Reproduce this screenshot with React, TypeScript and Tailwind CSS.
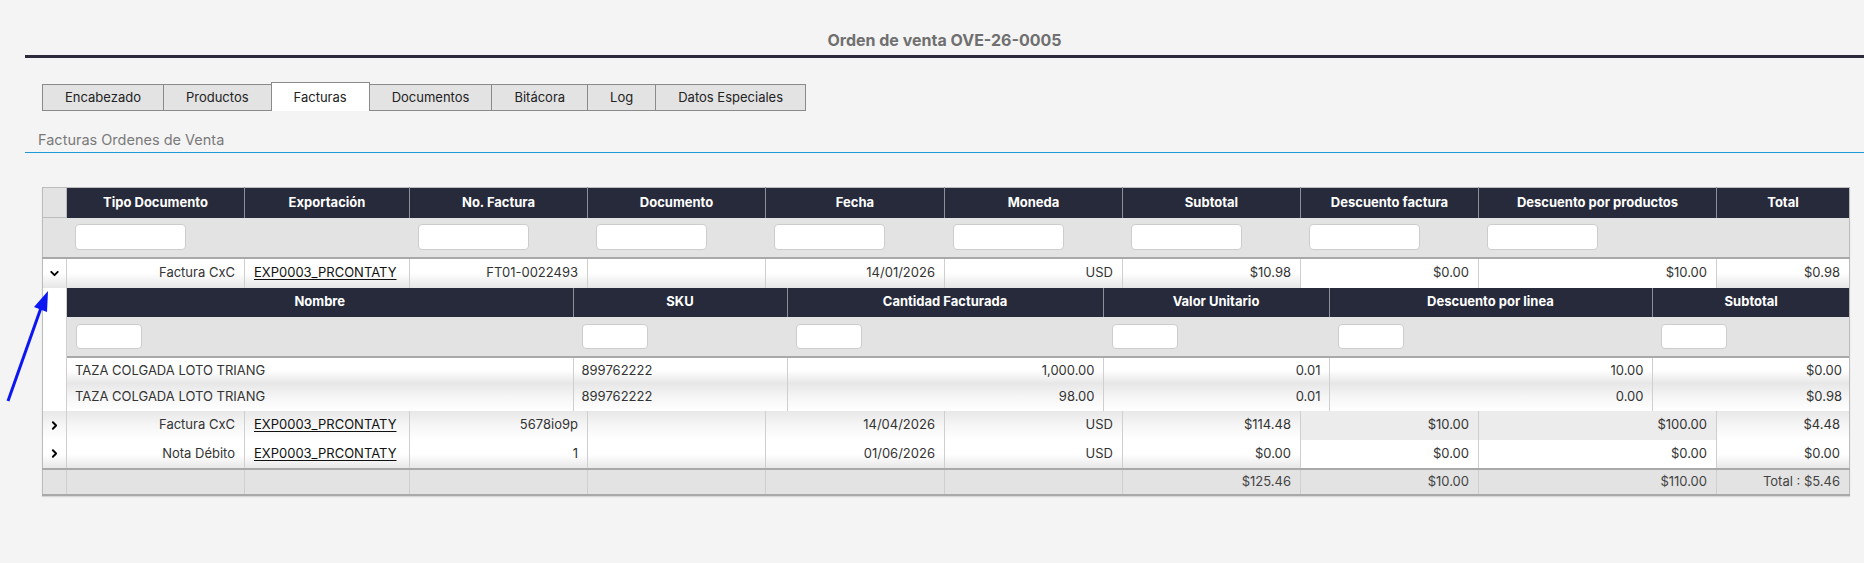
import { ChevronDown, ChevronRight } from 'lucide-react';

type Align = 'left' | 'right';

const tabs = ['Encabezado', 'Productos', 'Facturas', 'Documentos', 'Bitácora', 'Log', 'Datos Especiales'];

const invoiceCols: { title: string; width: string; filter: boolean; align: Align; flat?: boolean }[] = [
  { title: 'Tipo Documento', width: 'w-[178px]', filter: true, align: 'right' },
  { title: 'Exportación', width: 'w-[165px]', filter: false, align: 'left' },
  { title: 'No. Factura', width: 'w-[178px]', filter: true, align: 'right' },
  { title: 'Documento', width: 'w-[178px]', filter: true, align: 'right' },
  { title: 'Fecha', width: 'w-[179px]', filter: true, align: 'right' },
  { title: 'Moneda', width: 'w-[178px]', filter: true, align: 'right' },
  { title: 'Subtotal', width: 'w-[178px]', filter: true, align: 'right' },
  { title: 'Descuento factura', width: 'w-[178px]', filter: true, align: 'right', flat: true },
  { title: 'Descuento por productos', width: 'w-[238px]', filter: true, align: 'right', flat: true },
  { title: 'Total', width: 'w-[133px]', filter: false, align: 'right' },
];

const productCols: { title: string; width: string; align: Align }[] = [
  { title: 'Nombre', width: 'w-[506px]', align: 'left' },
  { title: 'SKU', width: 'w-[214px]', align: 'left' },
  { title: 'Cantidad Facturada', width: 'w-[316px]', align: 'right' },
  { title: 'Valor Unitario', width: 'w-[226px]', align: 'right' },
  { title: 'Descuento por linea', width: 'w-[323px]', align: 'right' },
  { title: 'Subtotal', width: 'w-[198px]', align: 'right' },
];

const invoices = [
  {
    open: true,
    cells: ['Factura CxC', 'EXP0003_PRCONTATY', 'FT01-0022493', '', '14/01/2026', 'USD', '$10.98', '$0.00', '$10.00', '$0.98'],
    products: [
      ['TAZA COLGADA LOTO TRIANG', '899762222', '1,000.00', '0.01', '10.00', '$0.00'],
      ['TAZA COLGADA LOTO TRIANG', '899762222', '98.00', '0.01', '0.00', '$0.98'],
    ],
  },
  {
    open: false,
    cells: ['Factura CxC', 'EXP0003_PRCONTATY', '5678io9p', '', '14/04/2026', 'USD', '$114.48', '$10.00', '$100.00', '$4.48'],
    products: [],
  },
  {
    open: false,
    cells: ['Nota Débito', 'EXP0003_PRCONTATY', '1', '', '01/06/2026', 'USD', '$0.00', '$0.00', '$0.00', '$0.00'],
    products: [],
  },
];

const totals = ['', '', '', '', '', '', '$125.46', '$10.00', '$110.00', 'Total : $5.46'];

const rowBg = (even: boolean) =>
  even
    ? 'bg-linear-to-b from-[#e8e8e8] via-[#f6f6f6] to-white'
    : 'bg-linear-to-b from-white via-white to-[#e6e6e6]';

function FilterInput({ small }: { small?: boolean }) {
  return (
    <input
      className={
        small
          ? 'block h-[25px] w-[66px] rounded-[4px] border border-[#cdcdcd] bg-white outline-none'
          : 'block h-[26px] w-[111px] rounded-[4px] border border-[#cdcdcd] bg-white outline-none'
      }
    />
  );
}

function ProductsGrid({ rows }: { rows: string[][] }) {
  return (
    <table className="w-full table-fixed border-collapse">
      <colgroup>
        {productCols.map((c) => (
          <col key={c.title} className={c.width} />
        ))}
      </colgroup>
      <thead>
        <tr className="h-[29px] bg-[#272a3b]">
          {productCols.map((c) => (
            <th key={c.title} className="border-x border-[#8e8f98] px-2 text-center text-[13px] font-bold text-white first:border-l-0 last:border-r-0">
              {c.title}
            </th>
          ))}
        </tr>
        <tr className="h-[40px] border-b-2 border-[#a9a9a9] bg-[#e3e3e3]">
          {productCols.map((c) => (
            <th key={c.title} className="px-[9px] font-normal">
              <FilterInput small />
            </th>
          ))}
        </tr>
      </thead>
      <tbody>
        {rows.map((r, i) => (
          <tr key={i} className={`h-[27px] ${rowBg(i % 2 === 1)}`}>
            {r.map((v, j) => (
              <td
                key={j}
                className={`border-x border-[#cfcfcf] px-2 text-[13px] text-[#333] first:border-l-0 last:border-r-0 ${
                  productCols[j].align === 'right' ? 'text-right' : 'text-left'
                }`}
              >
                {v}
              </td>
            ))}
          </tr>
        ))}
      </tbody>
    </table>
  );
}

function InvoicesGrid() {
  return (
    <table className="ml-[42px] w-[1807px] table-fixed border-collapse border border-[#bcbcbc] border-b-2 border-b-[#a9a9a9] shadow-[0_1px_1px_rgba(0,0,0,0.12)]">
      <colgroup>
        <col className="w-[24px]" />
        {invoiceCols.map((c) => (
          <col key={c.title} className={c.width} />
        ))}
      </colgroup>
      <thead>
        <tr className="h-[30px]">
          <th className="border border-[#bcbcbc] bg-[#e3e3e3]" />
          {invoiceCols.map((c) => (
            <th key={c.title} className="border-x border-[#8e8f98] bg-[#272a3b] px-2 text-center text-[13px] font-bold text-white last:border-r-0">
              {c.title}
            </th>
          ))}
        </tr>
        <tr className="h-[40px] border-b-2 border-[#a9a9a9] bg-[#e3e3e3]">
          <th />
          {invoiceCols.map((c) => (
            <th key={c.title} className="px-[8px] font-normal">
              {c.filter && <FilterInput />}
            </th>
          ))}
        </tr>
      </thead>
      <tbody>
        {invoices.map((inv, i) => {
          const even = i % 2 === 1;
          return [
            <tr key={`r${i}`} className={`${i === 0 ? 'h-[30px]' : 'h-[29px]'} ${rowBg(even)}`}>
              <td className="border-r border-[#cfcfcf] text-center">
                {inv.open ? (
                  <ChevronDown className="mx-auto size-[13px] text-black" strokeWidth={3.5} />
                ) : (
                  <ChevronRight className="mx-auto size-[13px] text-black" strokeWidth={3.5} />
                )}
              </td>
              {inv.cells.map((v, j) => (
                <td
                  key={j}
                  className={`border-x border-[#cfcfcf] px-[9px] text-[13px] text-[#333] last:border-r-0 ${
                    invoiceCols[j].align === 'right' ? 'text-right' : 'text-left'
                  } ${invoiceCols[j].flat ? (even ? 'bg-[#ececec]' : 'bg-white') : ''}`}
                >
                  {j === 1 ? <a className="text-[#111] underline underline-offset-2">{v}</a> : v}
                </td>
              ))}
            </tr>,
            inv.open && (
              <tr key={`d${i}`}>
                <td className="border-r border-[#cfcfcf] bg-white" />
                <td colSpan={10} className="p-0">
                  <ProductsGrid rows={inv.products} />
                </td>
              </tr>
            ),
          ];
        })}
      </tbody>
      <tfoot>
        <tr className="h-[26px] border-t-2 border-[#a9a9a9] bg-[#e3e3e3]">
          <td className="border-r border-[#cfcfcf]" />
          {totals.map((v, j) => (
            <td key={j} className="border-x border-[#cfcfcf] px-[9px] text-right text-[13px] text-[#444] last:border-r-0">
              {v}
            </td>
          ))}
        </tr>
      </tfoot>
    </table>
  );
}

export default function App() {
  return (
    <div className="relative min-h-screen bg-[#f4f4f4] font-['Inter','Liberation_Sans',sans-serif]">
      {/* Page title */}
      <div className="pl-[25px] pt-[30px]">
        <h1 className="h-[20px] text-center text-[16px] font-bold leading-[20px] text-[#6f6f6f]">
          Orden de venta OVE-26-0005
        </h1>
        <div className="mt-[5px] h-[3px] bg-[#2b2b3b]" />
      </div>

      {/* Tabs */}
      <div className="ml-[42px] mt-[24px] flex items-end">
        {tabs.map((t) => (
          <div
            key={t}
            className={
              t === 'Facturas'
                ? '-ml-px h-[29px] border border-b-0 border-[#8a8a8a] bg-white px-[22px] text-[13px] leading-[28px] text-[#222] first:ml-0'
                : '-ml-px h-[27px] border border-[#8a8a8a] bg-[#e3e3e3] px-[22px] text-[13px] leading-[25px] text-[#222] first:ml-0'
            }
          >
            {t}
          </div>
        ))}
      </div>

      {/* Section */}
      <div className="ml-[25px] mt-[19px]">
        <div className="h-[20px] pl-[13px] text-[14.5px] leading-[20px] text-[#7a7a7a]">Facturas Ordenes de Venta</div>
        <div className="mt-[2px] h-px bg-[#1d9ad6]" />
      </div>

      <div className="mt-[34px] pb-[70px]">
        <InvoicesGrid />
      </div>

      {/* Annotation arrow pointing at the expanded row */}
      <svg className="pointer-events-none absolute left-0 top-[280px]" width="60" height="130" viewBox="0 0 60 130">
        <line x1="8" y1="121" x2="42" y2="25" stroke="#0b16f2" strokeWidth="3" />
        <polygon points="48,11 34,27 47,32" fill="#0b16f2" />
      </svg>
    </div>
  );
}
